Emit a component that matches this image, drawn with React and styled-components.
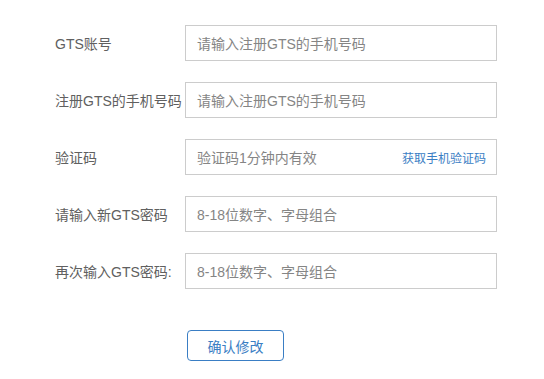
import React from "react";
import styled, { createGlobalStyle } from "styled-components";

const Global = createGlobalStyle`
  html, body { margin: 0; padding: 0; background: #fff; }
  body { font-family: "Liberation Sans", "Noto Sans CJK SC", sans-serif; }
  * { box-sizing: border-box; }
`;

const Form = styled.div`
  display: flex;
  flex-direction: column;
  gap: 21px;
  padding: 25px 0 0 55px;
`;

const Row = styled.div`
  display: flex;
  align-items: center;
`;

const Label = styled.label`
  width: 130px;
  flex: none;
  font-size: 14px;
  color: #606060;
  white-space: nowrap;
`;

const Field = styled.div`
  width: 312px;
  height: 36px;
  border: 1px solid #cccccc;
  display: flex;
  align-items: center;
  justify-content: space-between;
  padding: 0 10px 0 11px;
`;

const Placeholder = styled.span`
  font-size: 14px;
  color: #858585;
`;

const Link = styled.span`
  font-size: 12px;
  color: #3a7ec4;
`;

const Actions = styled.div`
  padding: 20px 0 0 132px;
`;

const Button = styled.button`
  width: 97px;
  height: 31px;
  border: 1px solid #3a7ec4;
  border-radius: 4px;
  background: #fff;
  color: #3a7ec4;
  font-family: inherit;
  font-size: 14px;
  padding: 0;
`;

const rows = [
  { label: "GTS账号", ph: "请输入注册GTS的手机号码" },
  { label: "注册GTS的手机号码", ph: "请输入注册GTS的手机号码" },
  { label: "验证码", ph: "验证码1分钟内有效", link: "获取手机验证码" },
  { label: "请输入新GTS密码", ph: "8-18位数字、字母组合" },
  { label: "再次输入GTS密码:", ph: "8-18位数字、字母组合" },
];

export default function App() {
  return (
    <>
      <Global />
      <Form>
        {rows.map((r) => (
          <Row key={r.label}>
            <Label>{r.label}</Label>
            <Field>
              <Placeholder>{r.ph}</Placeholder>
              {r.link && <Link>{r.link}</Link>}
            </Field>
          </Row>
        ))}
        <Actions>
          <Button>确认修改</Button>
        </Actions>
      </Form>
    </>
  );
}
